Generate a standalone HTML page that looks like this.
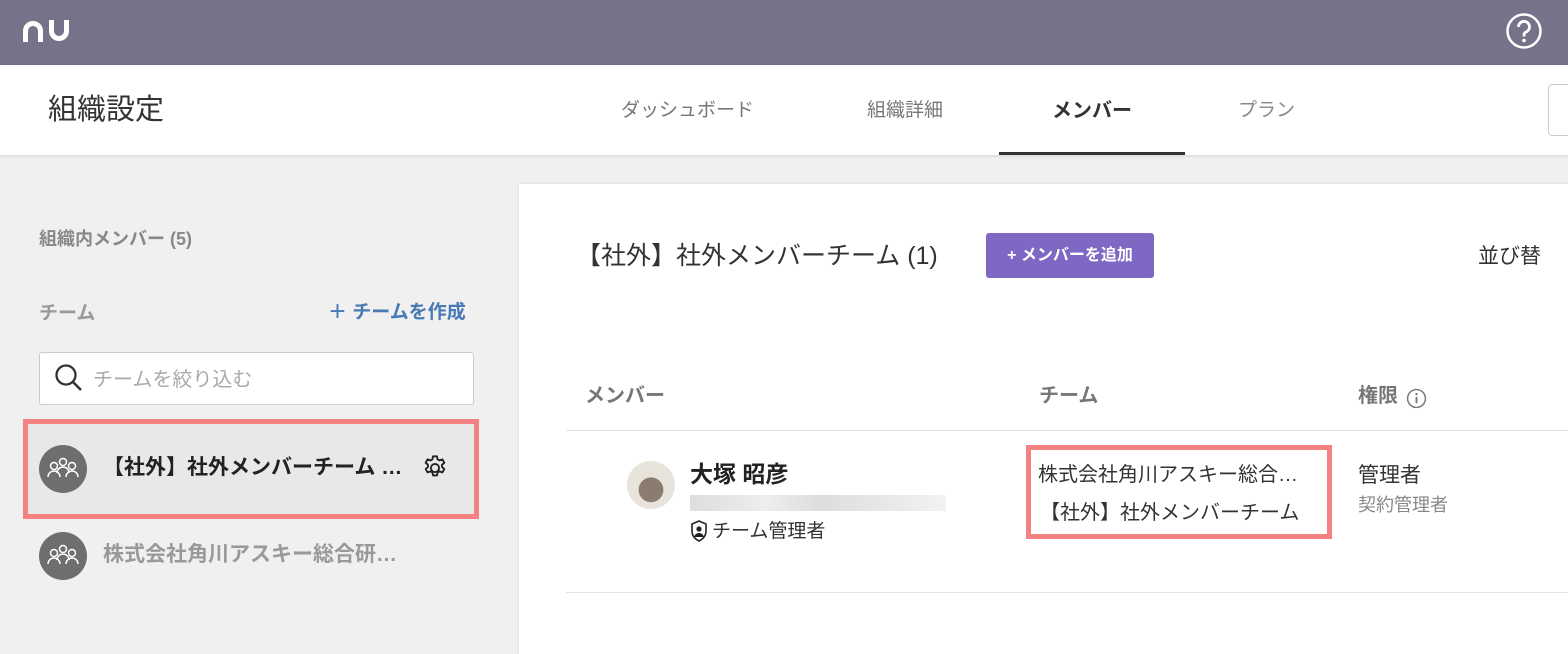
<!DOCTYPE html>
<html><head><meta charset="utf-8"><style>
*{margin:0;padding:0;box-sizing:border-box}
body{width:1568px;height:641px;overflow:hidden;background:#f0f0f0;font-family:"Liberation Sans","Noto Sans CJK JP",sans-serif;position:relative;color:#333}
.a{position:absolute;white-space:nowrap;line-height:1.2}
.t{transform:translateY(3px)}
</style></head><body>
<div class="a" style="left:0;top:0;width:1568px;height:65px;background:#747389"></div>
<svg class="a" style="left:22px;top:18px" width="52" height="26" viewBox="0 0 52 26"><path d="M3.5 24V13a7.5 7.5 0 0 1 15 0v11M29.5 2v11a7.5 7.5 0 0 0 15 0V2" stroke="#fff" stroke-width="5" fill="none"/></svg>
<svg class="a" style="left:1505px;top:12px" width="38" height="38" viewBox="0 0 38 38"><circle cx="19" cy="19" r="16.5" stroke="#fff" stroke-width="2.5" fill="none"/><path d="M13.5 15a5.5 5.5 0 1 1 7.5 5c-1.5.7-2 1.7-2 3v1.5" stroke="#fff" stroke-width="2.8" fill="none"/><circle cx="19" cy="28.5" r="1.8" fill="#fff"/></svg>
<div class="a" style="left:0;top:65px;width:1568px;height:90px;background:#fff;box-shadow:0 1px 3px rgba(0,0,0,.12)"></div>
<div class="a t" style="left:48px;top:90px;font-size:29px;color:#333">組織設定</div>
<div class="a t" style="left:621px;top:97px;font-size:19px;color:#777">ダッシュボード</div>
<div class="a t" style="left:867px;top:97px;font-size:19px;color:#777">組織詳細</div>
<div class="a t" style="left:1052px;top:96px;font-size:20px;color:#333;font-weight:bold">メンバー</div>
<div class="a t" style="left:1238px;top:97px;font-size:19px;color:#888">プラン</div>
<div class="a" style="left:999px;top:152px;width:186px;height:3px;background:#333"></div>
<div class="a" style="left:1548px;top:84px;width:30px;height:52px;border:1px solid #ccc;border-radius:4px;background:#fff"></div>

<div class="a t" style="left:39px;top:226px;font-size:18px;color:#888;font-weight:bold">組織内メンバー (5)</div>
<div class="a t" style="left:39px;top:300px;font-size:19px;color:#999;font-weight:bold">チーム</div>
<div class="a t" style="left:328px;top:299px;font-size:19px;color:#4a7ab5;font-weight:bold">＋ チームを作成</div>
<div class="a" style="left:39px;top:352px;width:435px;height:53px;background:#fff;border:1px solid #ccc;border-radius:3px"></div>
<svg class="a" style="left:54px;top:363px" width="30" height="30" viewBox="0 0 30 30"><circle cx="12" cy="12" r="9.5" stroke="#333" stroke-width="2.3" fill="none"/><path d="M19 19l8 8" stroke="#333" stroke-width="2.6"/></svg>
<div class="a t" style="left:93px;top:365px;font-size:20px;color:#aaa">チームを絞り込む</div>

<div class="a" style="left:23px;top:419px;width:456px;height:100px;background:#e8e8e8;border:5px solid #f48282"></div>
<svg class="a" style="left:39px;top:445px" width="48" height="48" viewBox="0 0 48 48"><circle cx="24" cy="24" r="24" fill="#6e6e6e"/><g stroke="#fff" stroke-width="1.5" fill="none"><circle cx="24" cy="17" r="3.5"/><path d="M18 28a6 6 0 0 1 12 0"/><circle cx="15" cy="21" r="3.5"/><path d="M9 32a6 6 0 0 1 12 0"/><circle cx="33" cy="21" r="3.5"/><path d="M27 32a6 6 0 0 1 12 0"/></g></svg>
<div class="a t" style="left:103px;top:452px;font-size:21px;font-weight:bold;color:#222">【社外】社外メンバーチーム …</div>
<svg class="a" style="left:421px;top:454px" width="28" height="28" viewBox="0 0 24 24"><path d="M12 8.5a3.5 3.5 0 1 0 0 7a3.5 3.5 0 1 0 0-7zM10.3 2h3.4l.5 2.6 1.6.9 2.5-.9 1.7 2.9-2 1.8v1.8l2 1.8-1.7 2.9-2.5-.9-1.6.9-.5 2.6h-3.4l-.5-2.6-1.6-.9-2.5.9-1.7-2.9 2-1.8V9.3l-2-1.8 1.7-2.9 2.5.9 1.6-.9z" stroke="#222" stroke-width="1.6" fill="none" stroke-linejoin="round"/></svg>
<svg class="a" style="left:39px;top:532px" width="48" height="48" viewBox="0 0 48 48"><circle cx="24" cy="24" r="24" fill="#6e6e6e"/><g stroke="#fff" stroke-width="1.5" fill="none"><circle cx="24" cy="17" r="3.5"/><path d="M18 28a6 6 0 0 1 12 0"/><circle cx="15" cy="21" r="3.5"/><path d="M9 32a6 6 0 0 1 12 0"/><circle cx="33" cy="21" r="3.5"/><path d="M27 32a6 6 0 0 1 12 0"/></g></svg>
<div class="a t" style="left:103px;top:539px;font-size:21px;font-weight:bold;color:#999">株式会社角川アスキー総合研…</div>

<div class="a" style="left:519px;top:184px;width:1060px;height:470px;background:#fff;box-shadow:0 0 3px rgba(0,0,0,.1)"></div>
<div class="a t" style="left:576px;top:238px;font-size:25px;color:#333">【社外】社外メンバーチーム (1)</div>
<div class="a" style="left:986px;top:233px;width:168px;height:45px;background:#7f68c4;border-radius:3px;color:#fff;font-size:16px;font-weight:bold;text-align:center;line-height:45px">+ メンバーを追加</div>
<div class="a t" style="left:1478px;top:241px;font-size:21px;color:#333">並び替</div>
<div class="a t" style="left:585px;top:381px;font-size:20px;color:#777;font-weight:bold">メンバー</div>
<div class="a t" style="left:1039px;top:381px;font-size:20px;color:#777;font-weight:bold">チーム</div>
<div class="a t" style="left:1358px;top:381px;font-size:20px;color:#777;font-weight:bold">権限</div>
<svg class="a" style="left:1406px;top:388px" width="21" height="21" viewBox="0 0 20 20"><circle cx="10" cy="10" r="8.5" stroke="#777" stroke-width="1.4" fill="none"/><path d="M10 8.5v6" stroke="#777" stroke-width="1.8"/><circle cx="10" cy="5.8" r="1.1" fill="#777"/></svg>
<div class="a" style="left:566px;top:430px;width:1002px;height:1px;background:#e4e4e4"></div>
<div class="a" style="left:566px;top:592px;width:1002px;height:1px;background:#e4e4e4"></div>
<div class="a" style="left:627px;top:461px;width:48px;height:48px;border-radius:50%;background:radial-gradient(circle at 50% 60%,#8a7d70 0 32%,#e8e4dc 34%)"></div>
<div class="a t" style="left:690px;top:458px;font-size:23px;font-weight:bold;color:#222">大塚 昭彦</div>
<div class="a" style="left:690px;top:495px;width:256px;height:16px;background:linear-gradient(90deg,#ddd,#eee 30%,#ddd 50%,#f2f2f2)"></div>
<svg class="a" style="left:690px;top:520px" width="18" height="22" viewBox="0 0 18 22"><path d="M9 1l7 3v7c0 5-3 8-7 10C5 19 2 16 2 11V4z" stroke="#222" stroke-width="1.6" fill="none"/><circle cx="9" cy="9" r="2.6" fill="#222"/><path d="M4 17c1-3 3-4 5-4s4 1 5 4" fill="#222"/></svg>
<div class="a t" style="left:712px;top:518px;font-size:19px;color:#333">チーム管理者</div>
<div class="a" style="left:1026px;top:445px;width:306px;height:94px;border:5px solid #f48282"></div>
<div class="a t" style="left:1038px;top:460px;font-size:20px;color:#333">株式会社角川アスキー総合…</div>
<div class="a t" style="left:1040px;top:498px;font-size:20px;color:#333">【社外】社外メンバーチーム</div>
<div class="a t" style="left:1358px;top:460px;font-size:21px;color:#333">管理者</div>
<div class="a t" style="left:1358px;top:492px;font-size:18px;color:#888">契約管理者</div>
</body></html>
